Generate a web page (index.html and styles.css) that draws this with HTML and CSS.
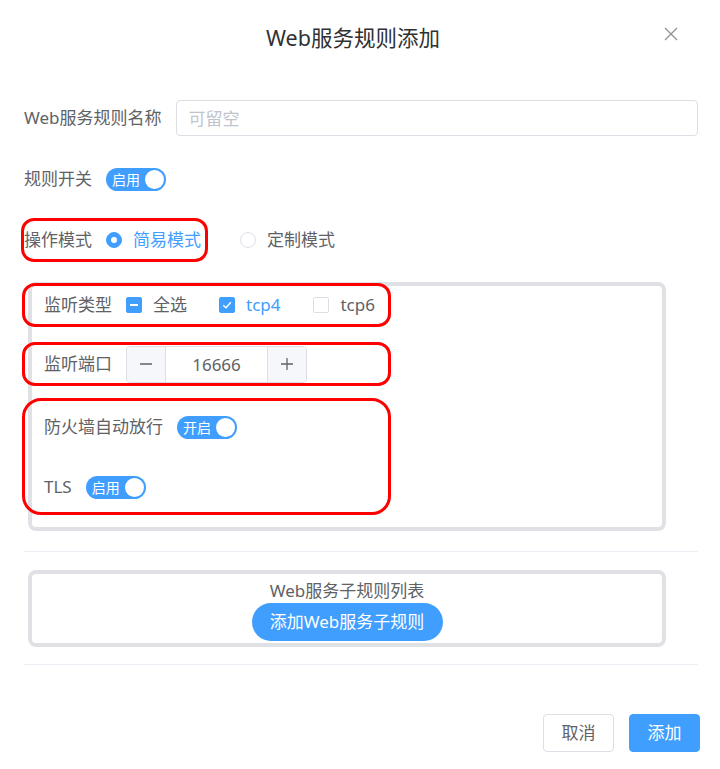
FILE: index.html
```html
<!DOCTYPE html>
<html>
	<head>
		<meta charset="UTF-8">
		<title>Web服务规则添加</title>
		<link rel="stylesheet" href="styles.css">
	</head>
	<body>
		<div class="dialog">
			<div class="dialog-header">
				<span class="dialog-title">Web服务规则添加</span>
				<span class="dialog-close">
					<svg width="14" height="14" viewBox="0 0 14 14"><path d="M1 1L13 13M13 1L1 13" stroke="#909399" stroke-width="1.3" fill="none"/></svg>
				</span>
			</div>
			<div class="dialog-body">
				<div class="form-item">
					<label class="form-label">Web服务规则名称</label>
					<input class="input" type="text" placeholder="可留空" />
				</div>
				<div class="form-item">
					<label class="form-label">规则开关</label>
					<span class="switch"><span class="switch-text">启用</span><span class="switch-knob"></span></span>
				</div>
				<!-- 操作模式 -->
				<div class="form-item mark mark-mode">
					<label class="form-label">操作模式</label>
					<span class="radio is-checked"><span class="radio-inner"></span>简易模式</span>
					<span class="radio"><span class="radio-inner"></span>定制模式</span>
				</div>
				<div class="card">
					<div class="form-item mark mark-row row-type">
						<label class="form-label">监听类型</label>
						<span class="checkbox check-all"><span class="checkbox-inner is-half"></span>全选</span>
						<span class="checkbox is-checked"><span class="checkbox-inner is-on">
							<svg width="10" height="8" viewBox="0 0 10 8"><path d="M1.2 4.2L4 6.8L8.8 1.2" stroke="#fff" stroke-width="1.4" fill="none"/></svg>
						</span>tcp4</span>
						<span class="checkbox"><span class="checkbox-inner"></span>tcp6</span>
					</div>
					<div class="form-item mark mark-row row-port">
						<label class="form-label">监听端口</label>
						<div class="input-number">
							<span class="num-btn num-minus">
								<svg width="14" height="14" viewBox="0 0 14 14"><path d="M1 7H13" stroke="#606266" stroke-width="1.3"/></svg>
							</span>
							<span class="num-value">16666</span>
							<span class="num-btn num-plus">
								<svg width="14" height="14" viewBox="0 0 14 14"><path d="M1 7H13M7 1V13" stroke="#606266" stroke-width="1.3"/></svg>
							</span>
						</div>
					</div>
					<div class="mark mark-group">
						<div class="form-item">
							<label class="form-label">防火墙自动放行</label>
							<span class="switch"><span class="switch-text">开启</span><span class="switch-knob"></span></span>
						</div>
						<div class="form-item item-tls">
							<label class="form-label">TLS</label>
							<span class="switch"><span class="switch-text">启用</span><span class="switch-knob"></span></span>
						</div>
					</div>
				</div>
				<div class="divider"></div>
				<div class="card card-sub">
					<div class="sub-title">Web服务子规则列表</div>
					<span class="btn-round">添加Web服务子规则</span>
				</div>
				<div class="divider divider-last"></div>
			</div>
			<div class="dialog-footer">
				<span class="btn">取消</span>
				<span class="btn btn-primary">添加</span>
			</div>
		</div>
	</body>
</html>
```

FILE: styles.css
```css
*{
	box-sizing: border-box;
	margin: 0;
	padding: 0;
}
body{
	background: #fff;
	font-family: "Noto Sans", "Noto Sans CJK SC", sans-serif;
	color: #606266;
	font-size: 17px;
}
.dialog{
	width: 720px;
	height: 769px;
	background: #fff;
}
.dialog-header{
	height: 72px;
	display: flex;
	align-items: center;
	padding: 0 41px 0 43px;
}
.dialog-title{
	flex: 1;
	text-align: center;
	font-size: 21.5px;
	color: #303133;
}
.dialog-close{
	width: 16px;
	height: 16px;
	display: flex;
	align-items: center;
	justify-content: center;
	margin-top: -4px;
}
.dialog-body{
	padding: 27px 22px 0 24px;
}

/* 表单行 */
.form-item{
	display: flex;
	align-items: center;
	height: 38px;
	margin-bottom: 23px;
}
.form-label{
	padding-right: 14px;
	white-space: nowrap;
	line-height: 24px;
	flex-shrink: 0;
}
.input{
	flex: 1;
	height: 36px;
	border: 1px solid #dcdfe6;
	border-radius: 4px;
	padding: 0 12px;
	font-family: inherit;
	font-size: 17px;
	color: #606266;
	outline: none;
}
.input::placeholder{
	color: #c0c4cc;
}

/* 开关 */
.switch{
	width: 60px;
	height: 23px;
	border-radius: 12px;
	background: #409eff;
	display: flex;
	align-items: center;
	padding: 0 2px 0 6px;
	flex-shrink: 0;
}
.switch-text{
	flex: 1;
	color: #fff;
	font-size: 14px;
	line-height: 23px;
}
.switch-knob{
	width: 19px;
	height: 19px;
	border-radius: 50%;
	background: #fff;
}

/* 单选 */
.radio{
	display: flex;
	align-items: center;
	line-height: 24px;
	margin-right: 39px;
	white-space: nowrap;
	flex-shrink: 0;
}
.radio:last-child{
	margin-right: 0;
}
.radio-inner{
	width: 16px;
	height: 16px;
	border-radius: 50%;
	border: 1px solid #dcdfe6;
	background: #fff;
	margin-right: 11px;
	display: flex;
	align-items: center;
	justify-content: center;
	flex-shrink: 0;
}
.radio.is-checked{
	color: #409eff;
}
.radio.is-checked .radio-inner{
	border-color: #409eff;
	background: #409eff;
}
.radio.is-checked .radio-inner:after{
	content: '';
	width: 6px;
	height: 6px;
	border-radius: 50%;
	background: #fff;
}

/* 多选 */
.checkbox{
	display: flex;
	align-items: center;
	line-height: 24px;
	margin-right: 33px;
	white-space: nowrap;
	flex-shrink: 0;
}
.check-all{
	margin-right: 32px;
}
.checkbox-inner{
	width: 16px;
	height: 16px;
	border-radius: 2px;
	border: 1px solid #dcdfe6;
	background: #fff;
	margin-right: 11px;
	display: flex;
	align-items: center;
	justify-content: center;
	flex-shrink: 0;
}
.checkbox-inner.is-half,
.checkbox-inner.is-on{
	border-color: #409eff;
	background: #409eff;
}
.checkbox-inner.is-half:after{
	content: '';
	width: 8px;
	height: 2px;
	background: #fff;
}
.checkbox.is-checked{
	color: #409eff;
}

/* 计数器 */
.input-number{
	width: 181px;
	height: 37px;
	border: 1px solid #dcdfe6;
	border-radius: 4px;
	display: flex;
	overflow: hidden;
	flex-shrink: 0;
}
.num-btn{
	width: 39px;
	background: #f5f7fa;
	display: flex;
	align-items: center;
	justify-content: center;
}
.num-minus{
	border-right: 1px solid #dcdfe6;
}
.num-plus{
	border-left: 1px solid #dcdfe6;
}
.num-value{
	flex: 1;
	text-align: center;
	line-height: 35px;
	color: #606266;
}

/* 红框标注 */
.mark{
	outline: 3px solid #ff0000;
	border-radius: 10px;
}
.mark-mode{
	width: 181px;
}
.card{
	margin-left: 4px;
	width: 638px;
	border: 4px solid #dfe1e5;
	border-radius: 8px;
	padding-bottom: 15px;
}
.mark-row{
	margin-left: -7px;
	padding-left: 19px;
	width: 363px;
}
.row-type{
	margin-top: 0;
	margin-bottom: 21px;
}
.row-port{
	margin-bottom: 18px;
}
.mark-group{
	margin-left: -7px;
	width: 363px;
	padding: 7px 0 6px 19px;
	border-radius: 16px;
}
.mark-group .form-item{
	margin-bottom: 22px;
}
.mark-group .item-tls{
	margin-bottom: 0;
}
.divider{
	height: 1px;
	background: #ebeef5;
	margin: 20px 0 18px;
}
.divider-last{
	margin: 17px 0 0;
}
.card-sub{
	display: flex;
	flex-direction: column;
	align-items: center;
	padding: 5px 0 2px;
}
.sub-title{
	line-height: 24px;
}
.btn-round{
	width: 191px;
	height: 38px;
	line-height: 38px;
	border-radius: 19px;
	background: #409eff;
	color: #fff;
	text-align: center;
}
.dialog-footer{
	display: flex;
	justify-content: flex-end;
	gap: 15px;
	padding: 49px 20px 0 0;
}
.btn{
	width: 71px;
	height: 38px;
	line-height: 36px;
	text-align: center;
	border: 1px solid #dcdfe6;
	border-radius: 4px;
	background: #fff;
	color: #606266;
}
.btn-primary{
	background: #409eff;
	border-color: #409eff;
	color: #fff;
}
```
